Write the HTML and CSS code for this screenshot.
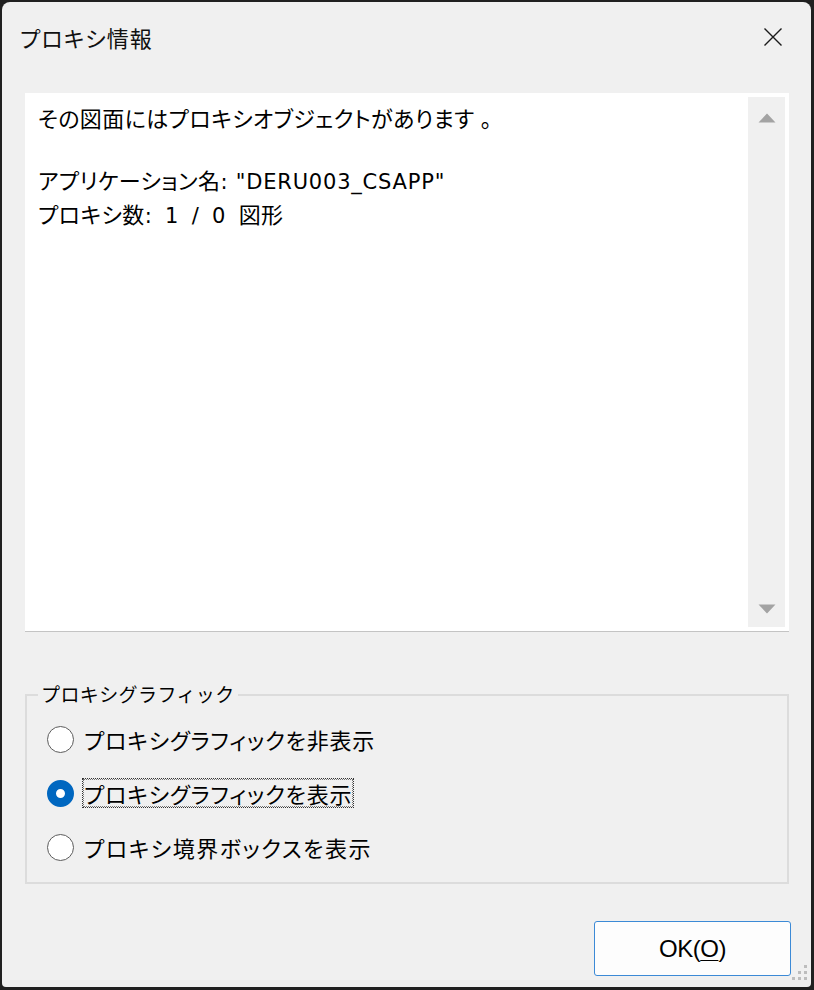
FILE: index.html
```html
<!DOCTYPE html>
<html lang="ja">
<head>
<meta charset="utf-8">
<title>プロキシ情報</title>
<link rel="stylesheet" href="styles.css">
</head>
<body>
<div class="window">
  <div class="titlebar">
    <span class="title">プロキシ情報</span>
    <span class="close">
      <svg width="20" height="20" viewBox="0 0 20 20"><path d="M1.5 1.5 L18.5 18.5 M18.5 1.5 L1.5 18.5" stroke="#1a1a1a" stroke-width="1.4" fill="none"/></svg>
    </span>
  </div>
  <div class="content">
    <div class="textbox">
      <div class="text">
        <p>その図面にはプロキシオブジェクトがあります<span class="maru">。</span></p>
        <p class="blank">&nbsp;</p>
        <p>アプリケーション名<span class="lat name">: "DERU003_CSAPP"</span></p>
        <p>プロキシ数<span class="lat count">: 1 / 0 </span>図形</p>
      </div>
      <div class="scrollbar">
        <svg width="18" height="10" viewBox="0 0 18 10"><path d="M9 0.5 L17.5 9.5 L0.5 9.5 Z" fill="#a3a3a3"/></svg>
        <svg width="18" height="10" viewBox="0 0 18 10"><path d="M0.5 0.5 L17.5 0.5 L9 9.5 Z" fill="#a3a3a3"/></svg>
      </div>
    </div>
    <div class="group">
      <span class="legend">プロキシグラフィック</span>
      <div class="radio"><span class="circle"></span><span class="label">プロキシグラフィックを非表示</span></div>
      <div class="radio"><span class="circle checked"></span><span class="label focus">プロキシグラフィックを表示</span></div>
      <div class="radio"><span class="circle"></span><span class="label wide">プロキシ境界ボックスを表示</span></div>
    </div>
    <div class="footer">
      <button class="ok">OK(<u>O</u>)</button>
    </div>
  </div>
  <div class="grip">
    <span class="dot d1"></span>
    <span class="dot d2"></span><span class="dot d3"></span>
    <span class="dot d4"></span><span class="dot d5"></span><span class="dot d6"></span>
  </div>
</div>
</body>
</html>
```

FILE: styles.css
```css
html, body {
  margin: 0;
  padding: 0;
}
body {
  background: #202020;
  width: 814px;
  height: 990px;
  overflow: hidden;
  font-family: "Noto Sans CJK JP", "Noto Sans", sans-serif;
  color: #000;
}
.window {
  position: relative;
  margin: 2px 0 0 2px;
  width: 809px;
  height: 985px;
  background: #f0f0f0;
  border-radius: 8px 8px 4px 4px;
  box-sizing: border-box;
}
.titlebar {
  height: 70px;
  display: flex;
  align-items: center;
  justify-content: space-between;
  padding-left: 18px;
}
.title {
  font-size: 22px;
  line-height: 30px;
  color: #111;
  font-weight: 400;
  font-feature-settings: "palt";
  letter-spacing: 1px;
}
.close {
  width: 48px;
  height: 48px;
  margin-right: 14px;
  display: flex;
  align-items: center;
  justify-content: center;
}
.content {
  padding: 0 22px 0 23px;
}
.textbox {
  margin-top: 21px;
  height: 539px;
  box-sizing: border-box;
  background: #fff;
  border-bottom: 1px solid #c4c4c4;
  display: flex;
}
.text {
  flex: 1;
  padding: 9px 0 0 13px;
  font-size: 22px;
  line-height: 31px;
  font-feature-settings: "palt";
  letter-spacing: 0.4px;
}
.text p {
  margin: 0;
}
.lat {
  font-family: "DejaVu Sans", "Liberation Sans", sans-serif;
  font-size: 21px;
  white-space: pre;
}
.lat.name {
  letter-spacing: 0.8px;
}
.lat.count {
  letter-spacing: 0.8px;
  word-spacing: 5px;
}
.maru {
  margin-left: 6px;
}
.scrollbar {
  width: 37px;
  margin: 4px 4px 4px 0;
  background: #f0f0f0;
  display: flex;
  flex-direction: column;
  align-items: center;
  justify-content: space-between;
  padding: 16px 0 13px;
  box-sizing: border-box;
}
.group {
  position: relative;
  margin-top: 62px;
  height: 190px;
  box-sizing: border-box;
  border: 2px solid #dcdcdc;
  padding: 16px 0 0 20px;
}
.legend {
  position: absolute;
  top: -16px;
  left: 11px;
  padding: 0 3px;
  background: #f0f0f0;
  font-size: 19px;
  line-height: 28px;
  letter-spacing: 0.4px;
  color: #000;
}
.radio {
  height: 54px;
  display: flex;
  align-items: center;
}
.circle {
  width: 27px;
  height: 27px;
  box-sizing: border-box;
  border: 1.5px solid #5c5c5c;
  border-radius: 50%;
  background: #fff;
  margin-right: 10px;
  flex: none;
}
.circle.checked {
  border: 9px solid #0067c0;
  background: #fff;
}
.label {
  font-size: 22px;
  line-height: 28px;
  font-feature-settings: "palt";
  letter-spacing: 0.8px;
  border: 1px solid transparent;
  margin-left: -2px;
  padding: 0 1px;
}
.label.wide {
  letter-spacing: 1.5px;
}
.label.focus {
  border: 1px dotted #333;
  outline: 1px dotted #777;
  outline-offset: -2px;
}
.footer {
  display: flex;
  justify-content: flex-end;
  margin-top: 37px;
}
.ok {
  width: 197px;
  height: 55px;
  margin-right: -2px;
  background: #fdfdfd;
  border: 1px solid #3c8ad6;
  border-radius: 3px;
  font-family: "Liberation Sans", "Noto Sans", sans-serif;
  font-size: 24px;
  color: #000;
  padding: 0;
  letter-spacing: -0.5px;
}
.ok u {
  text-decoration-thickness: 1px;
  text-underline-offset: 3px;
}
.grip {
  position: absolute;
  right: 4px;
  bottom: 4px;
  width: 18px;
  height: 18px;
}
.dot {
  position: absolute;
  width: 3px;
  height: 3px;
  background: #bdbdbd;
}
.d1 { right: 0; top: 0; }
.d2 { right: 6px; top: 6px; }
.d3 { right: 0; top: 6px; }
.d4 { right: 12px; top: 12px; }
.d5 { right: 6px; top: 12px; }
.d6 { right: 0; top: 12px; }
```
